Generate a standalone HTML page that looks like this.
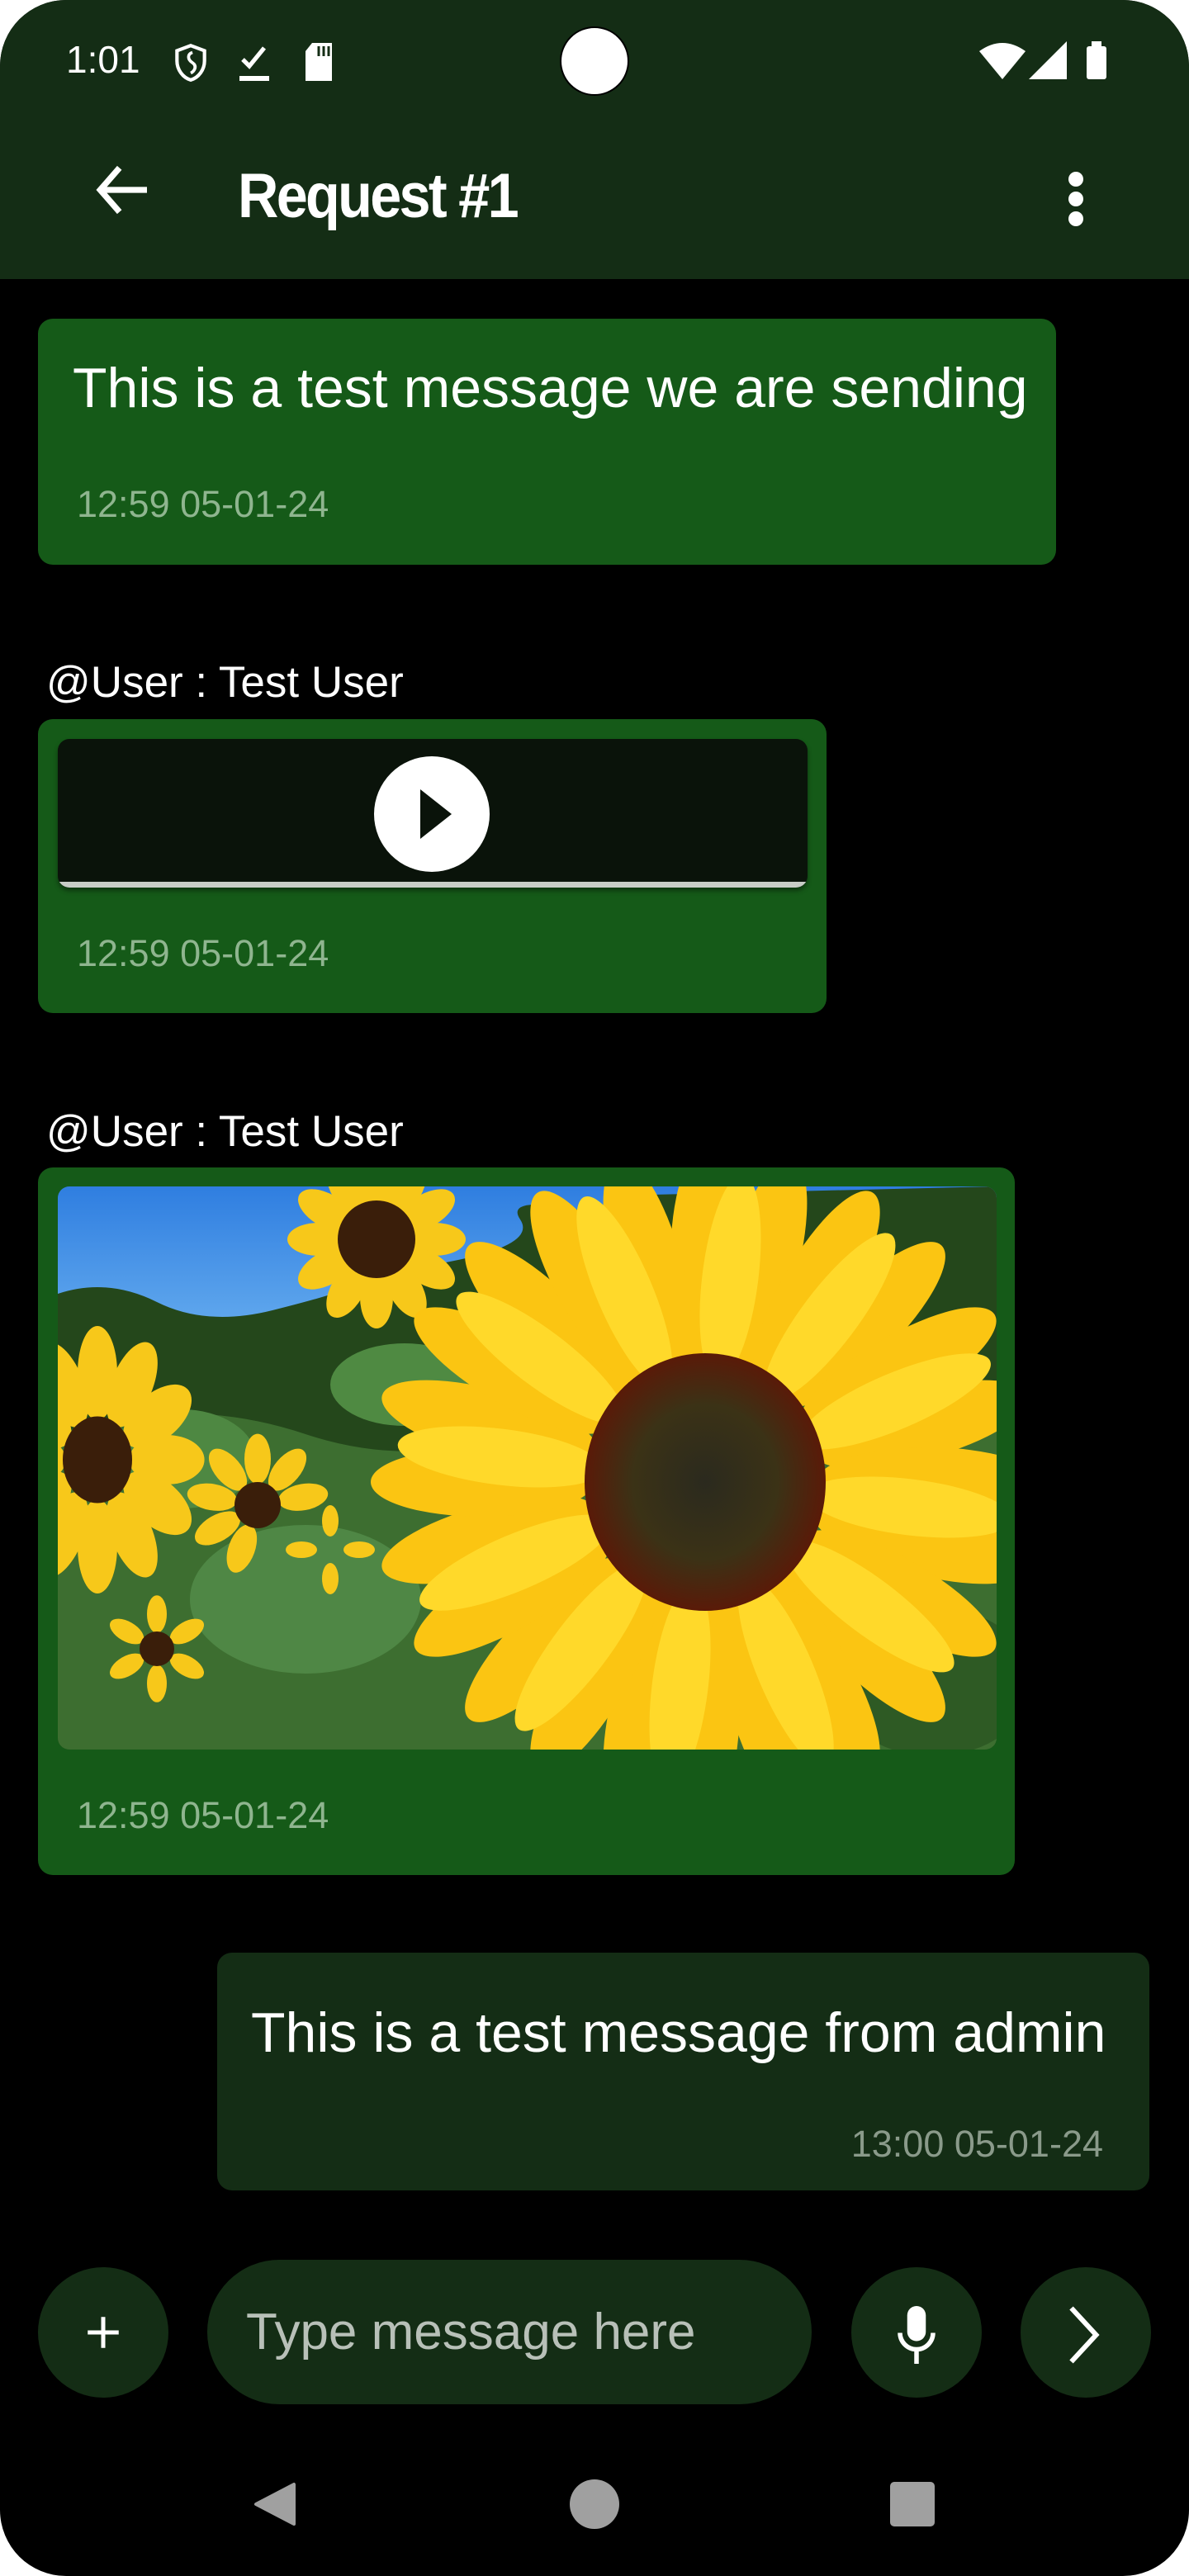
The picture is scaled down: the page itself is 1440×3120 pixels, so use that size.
<!DOCTYPE html>
<html><head><meta charset="utf-8"><style>
*{margin:0;padding:0;box-sizing:border-box}
html,body{width:1440px;height:3120px;background:#fff;overflow:hidden}
#ph{position:absolute;left:0;top:0;width:1440px;height:3120px;background:#000;border-radius:80px;overflow:hidden;font-family:"Liberation Sans",sans-serif;color:#fff}
.a{position:absolute}
.hdr{left:0;top:0;width:1440px;height:338px;background:#142d15}
.b1{background:#155a18;border-radius:18px}
.ts{font-size:45px;color:#8fb58f;white-space:nowrap;line-height:1}
.msg{font-size:68px;white-space:nowrap;line-height:1}
.usr{font-size:53px;white-space:nowrap;line-height:1}
.circ{border-radius:50%;background:#142d15}
</style></head><body><div id="ph">
<div class="a hdr"></div>
<div class="a" style="left:80px;top:46px;font-size:46px;line-height:52px">1:01</div>
<svg class="a" style="left:206px;top:50px" width="50" height="52" viewBox="0 0 24 24"><path d="M12 2L4 5v6c0 5 3.4 9.7 8 11 4.6-1.3 8-6 8-11V5z" fill="none" stroke="#fff" stroke-width="2"/><path d="M13 6c-3 1-3 4 0 6s1 5-1 6" fill="none" stroke="#fff" stroke-width="1.8"/></svg>
<svg class="a" style="left:286px;top:52px" width="44" height="48" viewBox="0 0 22 24"><path d="M4 10l4 4 9-11" fill="none" stroke="#fff" stroke-width="2.6"/><rect x="2" y="20" width="18" height="3" fill="#fff"/></svg>
<svg class="a" style="left:366px;top:52px" width="40" height="46" viewBox="0 0 20 23"><path d="M6 0h12v23H2V5z" fill="#fff"/><path d="M10 2v6M13 2v6M16 2v6" stroke="#142d15" stroke-width="1.5"/></svg>
<div class="a" style="left:678px;top:32px;width:84px;height:84px;border-radius:50%;background:#fff;border:2px solid #000"></div>
<svg class="a" style="left:1186px;top:50px" width="56" height="46" viewBox="0 0 28 23"><path d="M0 6Q14-4 28 6L14 23z" fill="#fff"/></svg>
<svg class="a" style="left:1246px;top:50px" width="46" height="46" viewBox="0 0 23 23"><path d="M23 0v23H0z" fill="#fff"/></svg>
<div class="a" style="left:1316px;top:56px;width:24px;height:40px;background:#fff;border-radius:3px"></div>
<div class="a" style="left:1322px;top:50px;width:12px;height:8px;background:#fff"></div>
<svg class="a" style="left:108px;top:190px" width="80" height="80" viewBox="0 0 24 24"><path d="M21 12H4M11 4l-7 8 7 8" fill="none" stroke="#fff" stroke-width="2.2"/></svg>
<div class="a" style="left:288px;top:196px;font-size:76px;font-weight:bold;line-height:84px;font-family:'Liberation Sans Narrow','Liberation Sans',sans-serif;letter-spacing:-3px;transform:scaleX(0.9);transform-origin:left">Request #1</div>
<div class="a" style="left:1294px;top:208px;width:18px;height:18px;border-radius:50%;background:#fff"></div>
<div class="a" style="left:1294px;top:232px;width:18px;height:18px;border-radius:50%;background:#fff"></div>
<div class="a" style="left:1294px;top:256px;width:18px;height:18px;border-radius:50%;background:#fff"></div>

<div class="a b1" style="left:46px;top:386px;width:1233px;height:298px"></div>
<div class="a msg" style="left:88px;top:436px">This is a test message we are sending</div>
<div class="a ts" style="left:93px;top:588px">12:59 05-01-24</div>

<div class="a usr" style="left:56px;top:800px">@User : Test User</div>
<div class="a b1" style="left:46px;top:871px;width:955px;height:356px"></div>
<div class="a" style="left:70px;top:895px;width:908px;height:180px;background:#0a130a;border-radius:14px;overflow:hidden;box-shadow:0 4px 6px rgba(0,0,0,.4)"><div class="a" style="left:0;bottom:0;width:100%;height:7px;background:#c8ccc6"></div></div>
<div class="a" style="left:453px;top:916px;width:140px;height:140px;border-radius:50%;background:#fff"></div>
<svg class="a" style="left:505px;top:954px" width="44" height="64" viewBox="0 0 44 64"><path d="M4 2L42 32 4 62z" fill="#0a130a"/></svg>
<div class="a ts" style="left:93px;top:1132px">12:59 05-01-24</div>

<div class="a usr" style="left:56px;top:1344px">@User : Test User</div>
<div class="a b1" style="left:46px;top:1414px;width:1183px;height:857px"></div>
<svg class="a" style="left:70px;top:1437px;border-radius:14px" width="1137" height="682" viewBox="0 0 1137 682">
<defs>
<linearGradient id="sky" x1="0" y1="0" x2="0" y2="1"><stop offset="0" stop-color="#2f7ee0"/><stop offset="1" stop-color="#6ab0f0"/></linearGradient>
<radialGradient id="cen"><stop offset="0" stop-color="#2b2a1e"/><stop offset=".6" stop-color="#3b3216"/><stop offset="1" stop-color="#5a1a08"/></radialGradient>
<ellipse id="pet" cx="0" cy="-270" rx="42" ry="135" fill="#fbc512"/>
<ellipse id="pet2" cx="0" cy="-250" rx="34" ry="125" fill="#ffd92a"/>
<ellipse id="sp" cx="0" cy="-70" rx="20" ry="38" fill="#f7c81a"/>
</defs>
<rect width="1137" height="682" fill="#3a6a2c"/>
<rect width="1137" height="200" fill="url(#sky)"/>
<path d="M0 130Q60 110 120 140T260 150T360 120T480 90T560 40T640 30T720 10L1137 0V682H0z" fill="#24471b"/>
<path d="M0 300Q150 250 300 300T600 280T1137 260V682H0z" fill="#3d6e30"/>
<ellipse cx="300" cy="500" rx="140" ry="90" fill="#4f8745"/>
<ellipse cx="150" cy="330" rx="90" ry="60" fill="#4e8842"/>
<ellipse cx="420" cy="240" rx="90" ry="50" fill="#4f8a42"/>
<ellipse cx="1060" cy="600" rx="120" ry="90" fill="#2e5a24"/>
<g transform="translate(386,64)"><use href="#sp"/><use href="#sp" transform="rotate(30)"/><use href="#sp" transform="rotate(60)"/><use href="#sp" transform="rotate(90)"/><use href="#sp" transform="rotate(120)"/><use href="#sp" transform="rotate(150)"/><use href="#sp" transform="rotate(180)"/><use href="#sp" transform="rotate(210)"/><use href="#sp" transform="rotate(240)"/><use href="#sp" transform="rotate(270)"/><use href="#sp" transform="rotate(300)"/><use href="#sp" transform="rotate(330)"/><circle r="47" fill="#3a1e0a"/></g>
<g transform="translate(48,331) scale(1.2,1.5)"><use href="#sp"/><use href="#sp" transform="rotate(30)"/><use href="#sp" transform="rotate(60)"/><use href="#sp" transform="rotate(90)"/><use href="#sp" transform="rotate(120)"/><use href="#sp" transform="rotate(150)"/><use href="#sp" transform="rotate(180)"/><use href="#sp" transform="rotate(210)"/><use href="#sp" transform="rotate(240)"/><use href="#sp" transform="rotate(270)"/><use href="#sp" transform="rotate(300)"/><use href="#sp" transform="rotate(330)"/><circle r="35" fill="#3a1e0a"/></g>
<g transform="translate(242,386) scale(.8)"><use href="#sp"/><use href="#sp" transform="rotate(40)"/><use href="#sp" transform="rotate(80)"/><use href="#sp" transform="rotate(200)"/><use href="#sp" transform="rotate(240)"/><use href="#sp" transform="rotate(280)"/><use href="#sp" transform="rotate(320)"/><circle r="35" fill="#3a1e0a"/></g>
<g transform="translate(120,560) scale(.6)"><use href="#sp"/><use href="#sp" transform="rotate(60)"/><use href="#sp" transform="rotate(120)"/><use href="#sp" transform="rotate(180)"/><use href="#sp" transform="rotate(240)"/><use href="#sp" transform="rotate(300)"/><circle r="35" fill="#3a1e0a"/></g>
<g transform="translate(330,440) scale(.5)"><use href="#sp"/><use href="#sp" transform="rotate(90)"/><use href="#sp" transform="rotate(180)"/><use href="#sp" transform="rotate(270)"/></g>
<g transform="translate(784,358)">
<use href="#pet"/><use href="#pet" transform="rotate(15)"/><use href="#pet" transform="rotate(30)"/><use href="#pet" transform="rotate(45)"/><use href="#pet" transform="rotate(60)"/><use href="#pet" transform="rotate(75)"/><use href="#pet" transform="rotate(90)"/><use href="#pet" transform="rotate(105)"/><use href="#pet" transform="rotate(120)"/><use href="#pet" transform="rotate(135)"/><use href="#pet" transform="rotate(150)"/><use href="#pet" transform="rotate(165)"/><use href="#pet" transform="rotate(180)"/><use href="#pet" transform="rotate(195)"/><use href="#pet" transform="rotate(210)"/><use href="#pet" transform="rotate(225)"/><use href="#pet" transform="rotate(240)"/><use href="#pet" transform="rotate(255)"/><use href="#pet" transform="rotate(270)"/><use href="#pet" transform="rotate(285)"/><use href="#pet" transform="rotate(300)"/><use href="#pet" transform="rotate(315)"/><use href="#pet" transform="rotate(330)"/><use href="#pet" transform="rotate(345)"/>
<use href="#pet2" transform="rotate(7)"/><use href="#pet2" transform="rotate(37)"/><use href="#pet2" transform="rotate(67)"/><use href="#pet2" transform="rotate(97)"/><use href="#pet2" transform="rotate(127)"/><use href="#pet2" transform="rotate(157)"/><use href="#pet2" transform="rotate(187)"/><use href="#pet2" transform="rotate(217)"/><use href="#pet2" transform="rotate(247)"/><use href="#pet2" transform="rotate(277)"/><use href="#pet2" transform="rotate(307)"/><use href="#pet2" transform="rotate(337)"/>
<ellipse rx="146" ry="156" fill="url(#cen)"/>
</g>
</svg>
<div class="a ts" style="left:93px;top:2176px">12:59 05-01-24</div>

<div class="a" style="left:263px;top:2365px;width:1129px;height:288px;background:#142d15;border-radius:18px"></div>
<div class="a msg" style="left:304px;top:2428px">This is a test message from admin</div>
<div class="a ts" style="right:104px;top:2574px;color:#8a9a8a">13:00 05-01-24</div>

<div class="a circ" style="left:46px;top:2746px;width:158px;height:158px"></div>
<svg class="a" style="left:100px;top:2800px" width="50" height="50" viewBox="0 0 24 24"><path d="M12 3v18M3 12h18" stroke="#fff" stroke-width="2.4"/></svg>
<div class="a" style="left:251px;top:2737px;width:732px;height:175px;background:#142d15;border-radius:88px"></div>
<div class="a" style="left:298px;top:2790px;font-size:62px;color:#b8c0b8;white-space:nowrap;line-height:70px">Type message here</div>
<div class="a circ" style="left:1031px;top:2746px;width:158px;height:158px"></div>
<svg class="a" style="left:1080px;top:2788px" width="60" height="80" viewBox="0 0 24 32"><rect x="7.5" y="2" width="9" height="17" rx="4.5" fill="#fff"/><path d="M4 15a8 8 0 0 0 16 0M12 23v7" fill="none" stroke="#fff" stroke-width="2.2"/></svg>
<div class="a circ" style="left:1236px;top:2746px;width:158px;height:158px"></div>
<svg class="a" style="left:1290px;top:2790px" width="50" height="76" viewBox="0 0 20 30"><path d="M3 2l12 13-12 13" fill="none" stroke="#fff" stroke-width="2.4"/></svg>

<svg class="a" style="left:306px;top:3005px" width="56" height="56" viewBox="0 0 28 28"><path d="M25 2v24L2 14z" fill="#a0a0a0" stroke="#a0a0a0" stroke-width="2" stroke-linejoin="round"/></svg>
<div class="a" style="left:690px;top:3003px;width:60px;height:60px;border-radius:50%;background:#a0a0a0"></div>
<div class="a" style="left:1078px;top:3006px;width:54px;height:54px;border-radius:5px;background:#a0a0a0"></div>
</div></body></html>
